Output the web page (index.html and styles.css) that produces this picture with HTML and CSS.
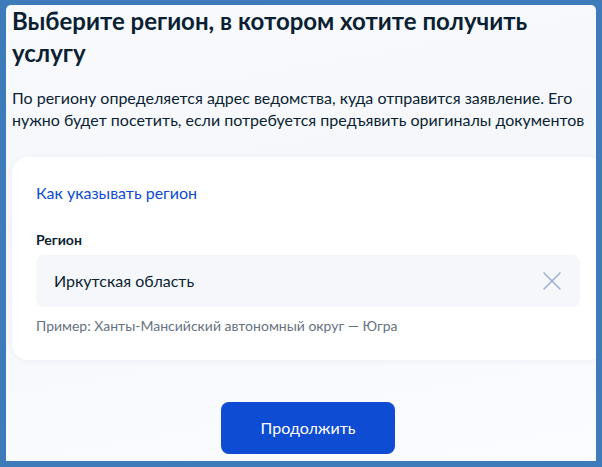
FILE: index.html
```html
<!DOCTYPE html>
<html lang="ru">
<head>
<meta charset="utf-8">
<title>Выбор региона</title>
<link rel="stylesheet" href="styles.css">
</head>
<body>
<div class="frame">
  <main class="screen">
    <div class="column">
      <h1 class="title">Выберите регион, в котором хотите получить услугу</h1>
      <p class="lead">По региону определяется адрес ведомства, куда отправится заявление. Его нужно будет посетить, если потребуется предъявить оригиналы документов</p>

      <section class="card">
        <a class="link" href="#">Как указывать регион</a>
        <label class="label" for="region">Регион</label>
        <div class="field">
          <input id="region" class="field-input" type="text" value="Иркутская область">
          <button class="clear" type="button" aria-label="Очистить">
            <svg width="18" height="18" viewBox="0 0 18 18" aria-hidden="true">
              <path d="M0.5 0.5 L17.5 17.5 M17.5 0.5 L0.5 17.5" stroke="currentColor" stroke-width="1.5" fill="none"/>
            </svg>
          </button>
        </div>
        <div class="hint">Пример: Ханты-Мансийский автономный округ — Югра</div>
      </section>

      <div class="actions">
        <button class="primary" type="button">Продолжить</button>
      </div>
    </div>
  </main>
</div>
</body>
</html>
```

FILE: styles.css
```css
html, body {
  margin: 0;
  padding: 0;
}

body {
  background: #3e7bba;
  font-family: Lato, "Noto Sans", sans-serif;
  color: #0b1f33;
}

.frame {
  height: 467px;
  box-sizing: border-box;
  padding: 5px 6px 6px 6px;
}

.screen {
  height: 100%;
  border-radius: 5px 5px 0 0;
  overflow: hidden;
  background: linear-gradient(170deg, #f9fafd 0%, #f5f7fb 40%, #fafcff 100%);
  padding-left: 6px;
}

.column {
  width: 592px;
}

.title {
  margin: 0;
  font-size: 24px;
  line-height: 32px;
  font-weight: 700;
  letter-spacing: 0;
}

.lead {
  margin: 18px 0 0;
  font-size: 16px;
  line-height: 22px;
}

.card {
  margin-top: 26px;
  background: #fff;
  border-radius: 16px;
  box-shadow: 0 1px 6px rgba(30, 60, 120, 0.06);
  padding: 24px 24px 24px;
  display: flex;
  flex-direction: column;
}

.link {
  font-size: 16px;
  line-height: 24px;
  color: #0d4cd3;
  text-decoration: none;
  align-self: flex-start;
}

.label {
  margin-top: 25px;
  font-size: 14px;
  line-height: 20px;
  font-weight: 700;
}

.field {
  margin-top: 5px;
  height: 52px;
  border-radius: 8px;
  background: #f5f7fa;
  display: flex;
  align-items: center;
  padding: 0 19px 0 18px;
}

.field-input {
  flex: 1;
  border: 0;
  background: transparent;
  font: 16px/24px Lato, "Noto Sans", sans-serif;
  color: #0b1f33;
  padding: 0;
  outline: none;
}

.clear {
  border: 0;
  background: none;
  padding: 0;
  width: 18px;
  height: 18px;
  color: #9badd4;
  display: flex;
}

.hint {
  margin-top: 9px;
  font-size: 14px;
  line-height: 20px;
  color: #66727f;
}

.actions {
  display: flex;
  justify-content: center;
  margin-top: 42px;
}

.primary {
  width: 174px;
  height: 52px;
  border: 0;
  border-radius: 8px;
  background: #0d4cd3;
  color: #fff;
  font: 16px/24px Lato, "Noto Sans", sans-serif;
}
```
